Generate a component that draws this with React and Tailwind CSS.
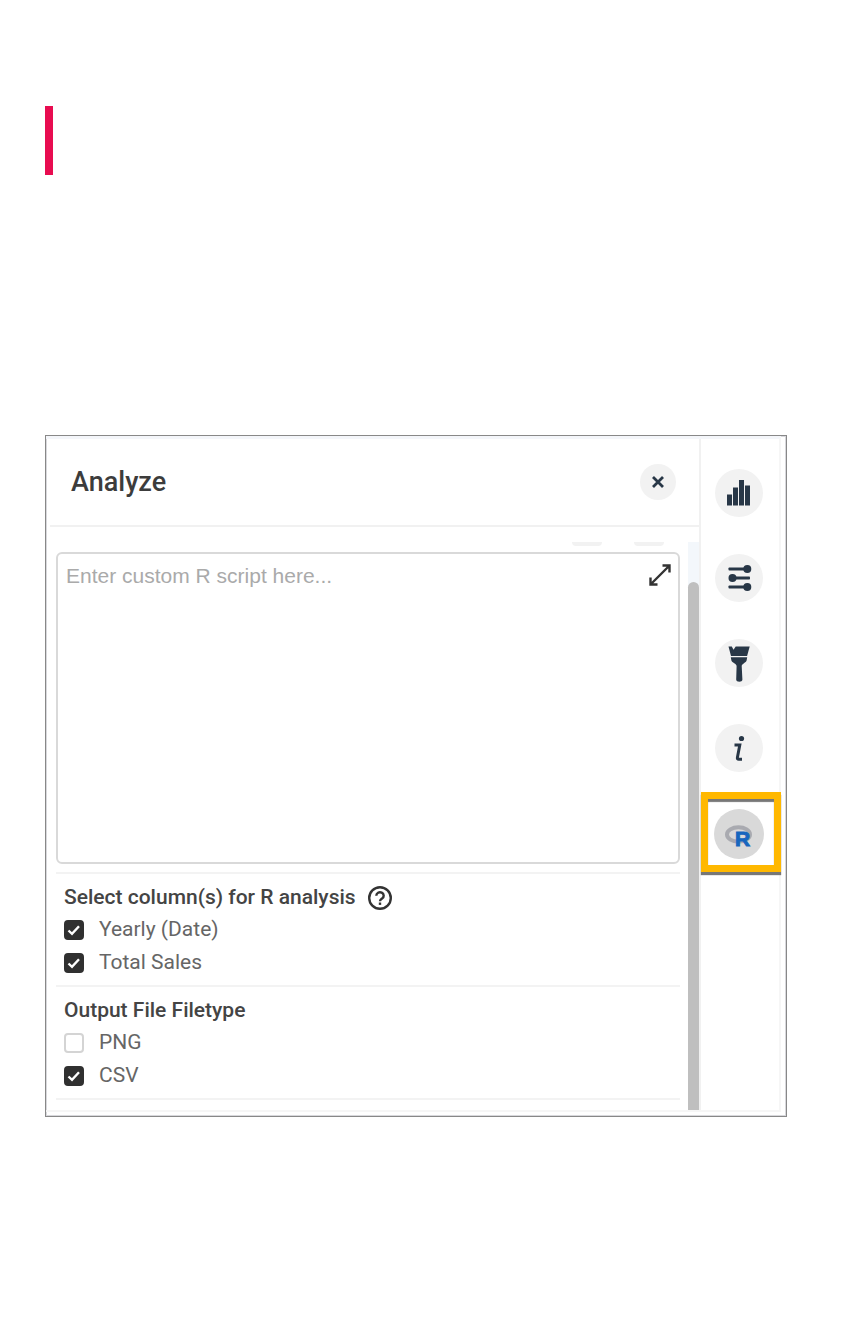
import React, { useState } from 'react';

function BarsIcon() {
  return (
    <svg viewBox="0 0 48 48" className="size-full" fill="#283747" aria-hidden="true">
      <rect x="12" y="25.500" width="5" height="11" />
      <rect x="18" y="18.500" width="5" height="18" />
      <rect x="24" y="11" width="5" height="25.500" />
      <rect x="30" y="16.500" width="5" height="20" />
    </svg>
  );
}

function SettingsIcon() {
  return (
    <svg viewBox="0 0 48 48" className="size-full" fill="#283747" aria-hidden="true">
      <rect x="13.500" y="13.500" width="19" height="3" rx="0.800" />
      <rect x="15" y="22.500" width="20" height="3" rx="0.800" />
      <rect x="13.500" y="31.500" width="19" height="3" rx="0.800" />
      <circle cx="32.300" cy="15" r="4" />
      <circle cx="17.500" cy="24" r="4" />
      <circle cx="32.300" cy="33" r="4" />
    </svg>
  );
}

function BrushIcon() {
  return (
    <svg viewBox="0 0 48 48" className="size-full" fill="#283747" aria-hidden="true">
      <path d="M13.500 7.500h3.300l1.700 3.300 2.200-3.300h14l-2.600 9.500H16z" />
      <path d="M15.800 18.300h16.400l-.6 3.200c-.5 2-4.900 3.500-4.900 5.500l.7 13.500c.1 3-6.300 3-6.200 0L21.600 27c0-2.200-4.700-3.500-5.200-5.500z" />
    </svg>
  );
}

function InfoIcon() {
  return (
    <svg viewBox="0 0 48 48" className="size-full" fill="none" stroke="#283747" strokeWidth="3" aria-hidden="true">
      <path d="M19.500 21h5.300l-2.400 12.500q-.3 1.800 1.300 1.800h3.300" />
      <circle cx="26.500" cy="14.500" r="2.600" fill="#283747" stroke="none" />
    </svg>
  );
}

function RIcon() {
  return (
    <svg viewBox="0 0 50 50" className="size-full" aria-hidden="true">
      <ellipse cx="24.500" cy="25.500" rx="11.500" ry="7.200" fill="none" stroke="#a9aab0" strokeWidth="4" />
      <text x="21" y="37" fontFamily="Liberation Sans, sans-serif" fontWeight="700" fontSize="21" fill="#1766be" stroke="#1766be" strokeWidth="1">
        R
      </text>
    </svg>
  );
}

const tools = [
  { name: 'Chart', Icon: BarsIcon },
  { name: 'Settings', Icon: SettingsIcon },
  { name: 'Format', Icon: BrushIcon },
  { name: 'Info', Icon: InfoIcon },
  { name: 'Analyze', Icon: RIcon, active: true },
];

function CheckRow({ label, defaultChecked }) {
  const [checked, setChecked] = useState(defaultChecked);

  return (
    <label className="flex h-[33px] items-center gap-[15px] text-[21px] text-[#666]">
      <span className="relative size-5">
        <input
          type="checkbox"
          checked={checked}
          onChange={() => setChecked(!checked)}
          className="block size-5 appearance-none rounded-sm border-2 border-[#d4d4d4] bg-white checked:border-[#303030] checked:bg-[#303030]"
        />
        {checked && (
          <svg viewBox="0 0 20 20" className="pointer-events-none absolute inset-0 size-5" fill="none" stroke="#fff" strokeWidth="2.400">
            <path d="M4.500 10.500l3.500 3.300 7-7.500" />
          </svg>
        )}
      </span>
      {label}
    </label>
  );
}

export default function App() {
  return (
    <div className="bg-white pt-[106px] pr-[77px] pb-[226px] pl-[45px] font-['Roboto',sans-serif]">
      <div className="h-[69px] w-2 bg-[#e80c50]" />

      <main className="mt-[260px] border border-[#888] pr-[5px] pb-1 shadow-[inset_0_0_0_1px_#d8d8dc]">
        <div className="flex border-t-3 border-r-2 border-b-2 border-[#f6f6f6] border-t-[#f4f6fa]">
          {/* analyze panel */}
          <section className="flex min-w-0 flex-1 flex-col">
            <header className="ml-1 flex h-[88px] items-center justify-between border-b-2 border-[#f1f1f1] pr-[23px] pl-[21px]">
              <h1 className="text-[27px] font-medium text-[#3c3c3c]">Analyze</h1>
              <button type="button" aria-label="Close" className="flex size-9 items-center justify-center rounded-full bg-[#f2f2f2]">
                <svg viewBox="0 0 12 12" className="size-3" stroke="#283747" strokeWidth="2.800">
                  <path d="M1 1l10 10M11 1L1 11" />
                </svg>
              </button>
            </header>

            <div className="mt-[15px] flex flex-1">
              <div className="min-w-0 flex-1 pr-2 pl-[10px]">
                <div className="flex h-[10px] items-start justify-end gap-8 pr-4">
                  <span className="h-1 w-[30px] rounded-b-full bg-[#f2f2f2]" />
                  <span className="h-1 w-[30px] rounded-b-full bg-[#f2f2f2]" />
                </div>
                <div className="relative">
                  <textarea
                    aria-label="Custom R script"
                    placeholder="Enter custom R script here..."
                    className="block h-[312px] w-full resize-none rounded-md border-2 border-[#d9d9d9] px-2 py-2 font-['Liberation_Sans',sans-serif] text-[21px] leading-7 text-[#444] placeholder:text-[#aaa]"
                  />
                  <button type="button" aria-label="Expand" className="absolute top-[11px] right-2">
                    <svg viewBox="0 0 24 24" className="size-6" fill="none" stroke="#333" strokeWidth="2.400">
                      <path d="M3 21L21 3M14.500 2.500h7v7M2.500 14.500v7h7" />
                    </svg>
                  </button>
                </div>

                <div role="group" aria-labelledby="columns" className="mt-2 border-t-2 border-[#f3f3f3] pt-[9px] pb-[6px] pl-2">
                  <div className="flex h-[30px] items-center gap-3">
                    <h2 id="columns" className="text-[21px] font-medium text-[#444]">Select column(s) for R analysis</h2>
                    <button type="button" aria-label="Help">
                      <svg viewBox="0 0 24 24" className="size-6" fill="none" stroke="#333" strokeWidth="2.400">
                        <circle cx="12" cy="12" r="10.800" />
                        <path d="M8.300 9.700a3.700 3.400 0 1 1 5.800 2.800c-1.400 1-2.100 1.300-2.100 2.800" />
                        <path d="M12 16.500v2.400" />
                      </svg>
                    </button>
                  </div>
                  <CheckRow label="Yearly (Date)" defaultChecked />
                  <CheckRow label="Total Sales" defaultChecked />
                </div>

                <div role="group" aria-labelledby="filetype" className="border-y-2 border-[#f3f3f3] pt-[9px] pb-[6px] pl-2">
                  <h2 id="filetype" className="flex h-[30px] items-center text-[21px] font-medium text-[#444]">Output File Filetype</h2>
                  <CheckRow label="PNG" defaultChecked={false} />
                  <CheckRow label="CSV" defaultChecked />
                </div>
                <div className="h-[10px]" />
              </div>

              {/* scroll track */}
              <div className="flex w-[11px] bg-[#f3f7fb] pt-[40px]">
                <div className="flex-1 rounded-t-full bg-[#bfbfbf]" />
              </div>
            </div>
          </section>

          <nav className="flex w-20 flex-col items-center gap-[37px] border-l-2 border-[#f1f1f1] pt-[30px] pr-[2px]">
            {tools.map(({ name, Icon, active }) => (
              <button
                key={name}
                type="button"
                aria-label={name}
                className={active ? 'relative size-[50px] rounded-full bg-[#d9d9d9]' : 'size-12 rounded-full bg-[#f2f2f2]'}
              >
                <Icon />
                {active && (
                  <span className="pointer-events-none absolute -top-[17px] -right-[17px] -bottom-[13px] -left-[13px] border-[7px] border-[#ffb800] shadow-[0_3px_1px_#777,inset_0_3px_1px_#777]" />
                )}
              </button>
            ))}
          </nav>
        </div>
      </main>
    </div>
  );
}
